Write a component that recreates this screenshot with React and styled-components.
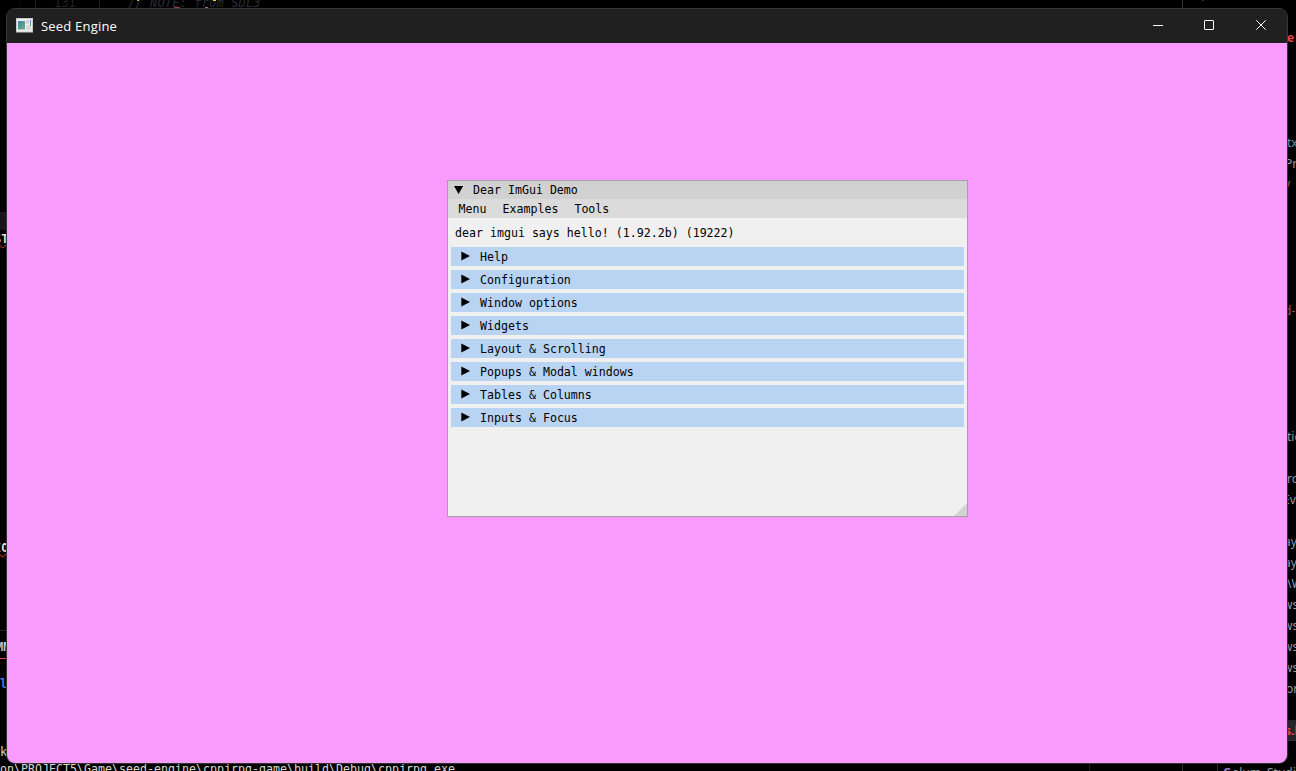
import React from "react";
import styled, { createGlobalStyle } from "styled-components";

const GlobalStyle = createGlobalStyle`
  body { margin: 0; background: #000; overflow: hidden; }
  * { box-sizing: border-box; }
`;

const Desktop = styled.main`
  position: relative;
  width: 1296px;
  height: 771px;
  padding: 8px 8px 7px 6px;
  overflow: hidden;
  background: #000;
`;

const Snippet = styled.span`
  position: absolute;
  left: ${(p) => p.$x}px;
  top: ${(p) => p.$y}px;
  color: ${(p) => p.$color || "#9a9a9a"};
  font: ${(p) => (p.$italic ? "italic " : "")}${(p) => p.$size || 12}px/16px
    ${(p) => (p.$mono ? '"DejaVu Sans Mono", monospace' : '"Noto Sans", sans-serif')};
  letter-spacing: ${(p) => p.$track || 0}px;
  font-weight: ${(p) => (p.$bold ? 700 : 400)};
  white-space: pre;
  text-decoration: ${(p) => (p.$wavy ? "underline wavy #e03c3c 1px" : "none")};
`;

const Mark = styled.i`
  position: absolute;
  left: ${(p) => p.$x}px;
  top: ${(p) => p.$y}px;
  width: ${(p) => p.$w || 1}px;
  height: ${(p) => p.$h || 1}px;
  background: ${(p) => p.$color || "#1c1c1c"};
`;

const AppWindow = styled.section`
  position: relative;
  display: flex;
  flex-direction: column;
  width: 1282px;
  height: 756px;
  border: 1px solid #363636;
  border-radius: 9px;
  overflow: hidden;
  background: #202020;
`;

const TitleBar = styled.header`
  display: flex;
  align-items: center;
  flex: 0 0 34px;
  padding-left: 9px;
  background: #202020;
`;

const AppTitle = styled.h1`
  flex: 1;
  margin: 0 0 1px 8px;
  color: #fff;
  font: 400 13px/18px "Open Sans", "Noto Sans", sans-serif;
  letter-spacing: 0.2px;
`;

const CaptionButton = styled.button`
  display: flex;
  align-items: center;
  justify-content: center;
  width: ${(p) => p.$w || 51}px;
  height: 34px;
  padding: 0 0 2px;
  border: 0;
  background: none;
`;

const Viewport = styled.div`
  flex: 1;
  padding: 137px 0 0 440px;
  background: #f99afe;
`;

const Panel = styled.article`
  display: flex;
  flex-direction: column;
  position: relative;
  width: 521px;
  height: 337px;
  border: 1px solid #a3a3a3;
  background: #f0f0f0;
  color: #000;
  font: 11.627px/13px "DejaVu Sans Mono", monospace;
  white-space: pre;
`;

const PanelTitle = styled.div`
  display: flex;
  align-items: center;
  gap: 10px;
  height: 18px;
  padding-left: 6px;
  background: #d1d1d1;

  svg { margin-top: -1px; }
`;

const MenuBar = styled.nav`
  display: flex;
  align-items: center;
  gap: 16px;
  height: 19px;
  padding: 1px 0 0 10.5px;
  background: #dbdbdb;
`;

const Greeting = styled.p`
  height: 29px;
  margin: 0;
  padding: 9px 0 0 7px;
`;

const Sections = styled.div`
  display: flex;
  flex-direction: column;
  gap: 4px;
  padding: 0 3px;
`;

const SectionHeader = styled.div`
  display: flex;
  align-items: center;
  gap: 10px;
  height: 19px;
  padding: 1px 0 0 10px;
  background: #b9d4f3;

  svg { margin-top: -1.4px; }
`;

const ResizeGrip = styled.i`
  position: absolute;
  right: 0;
  bottom: 0;
  width: 13px;
  height: 13px;
  background: #d3d3d3;
  clip-path: polygon(100% 0, 100% 100%, 0 100%);
`;

const IconDrawing = styled.svg`
  margin-bottom: 2px;
`;

const AppIcon = () => (
  <IconDrawing width="17" height="15" viewBox="0 0 17 15">
    <defs>
      <linearGradient id="screen" x1="0" y1="0" x2="1" y2="1">
        <stop offset="0" stopColor="#3f7fa8" />
        <stop offset="1" stopColor="#65b982" />
      </linearGradient>
    </defs>
    <rect x=".5" y=".5" width="16" height="13.5" fill="#eee" stroke="#c5c9cc" />
    <rect x="2" y="3" width="7" height="8.5" fill="url(#screen)" />
    <rect x="10" y="2" width="3" height="4" fill="#d3d3d3" />
    <rect x="10" y="7" width="5" height="5" fill="#dadada" />
    <rect x="14" y="2" width="1" height="3" fill="#4778ca" />
    <rect x="14" y="5" width="1" height="3" fill="#58a970" />
  </IconDrawing>
);

const Arrow = ({ down }) => (
  <svg width="9" height="10" viewBox="0 0 9 10">
    <path d={down ? "M0 1h9.2L4.6 9z" : "M.3 .5v9L9 5z"} />
  </svg>
);

const sections = [
  "Help",
  "Configuration",
  "Window options",
  "Widgets",
  "Layout & Scrolling",
  "Popups & Modal windows",
  "Tables & Columns",
  "Inputs & Focus",
];

const sideText = [
  [1287, 30, "e", "#f04444", true],
  [1287, 135, "txt", "#5f98a8"],
  [1285, 156, "Pr"],
  [1284, 176, "y", "#a66b50"],
  [1284, 303, "d-", "#a04a63"],
  [1287, 429, "tic"],
  [1287, 471, "rop"],
  [1283, 492, "Ev"],
  [1284, 534, "ay", "#8599ad"],
  [1284, 555, "ay", "#8599ad"],
  [1287, 576, "\\W", "#8599ad"],
  [1283, 597, "ws"],
  [1283, 618, "ws"],
  [1283, 639, "ws"],
  [1283, 660, "ws"],
  [1286, 681, "on"],
];

const marks = [
  [20, 0, 1, 8, "#080808"],
  [35, 0, 1, 8],
  [99, 0, 1, 8],
  [1182, 0, 1, 8, "#303030"],
  [1202, 0, 2, 1, "#123c35"],
  [0, 212, 7, 18, "#161616"],
  [0, 630, 7, 1, "#242424"],
  [0, 658, 7, 1, "#e83e51"],
  [1288, 720, 8, 21, "#252525"],
  [1288, 740, 8, 1, "#303030"],
  [1089, 764, 1, 7, "#202020"],
  [1182, 764, 1, 7, "#303030"],
  [1217, 764, 1, 7, "#303030"],
];

export default function App() {
  return (
    <Desktop>
      <GlobalStyle />
      {marks.map(([x, y, w, h, color]) => (
        <Mark key={`${x}-${y}`} $x={x} $y={y} $w={w} $h={h} $color={color} />
      ))}
      <Snippet $x={54} $y={-5} $mono $color="#242424">131</Snippet>
      <Snippet $x={128} $y={-5} $mono $italic $color="#2c2c36" $track={0.15}>// NOTE: from SDL3</Snippet>
      <Mark $x={137} $y={0} $w={2} $color="#d0b52d" />
      <Mark $x={213} $y={0} $w={3} $color="#e4ca20" />
      <Mark $x={174} $y={7} $w={6} $color="#9d3737" />
      <Mark $x={205} $y={7} $w={3} $color="#aa68aa" />
      <Snippet $x={-6} $y={231} $mono $bold $color="#ddd" $wavy>ST</Snippet>
      <Snippet $x={-6} $y={540} $mono $bold $color="#ddd" $wavy>IO</Snippet>
      <Snippet $x={-4} $y={639} $mono $bold $color="#b8c8ed">MM</Snippet>
      <Snippet $x={0} $y={676} $mono $bold $color="#397ce0">l</Snippet>
      <Snippet $x={0} $y={744} $mono $color="#d0d0c8">k</Snippet>
      <Snippet $x={0} $y={761} $mono $size={11.64} $color="#d8d8d0">
        {"on\\PROJECT5\\Game\\seed-engine\\cppjrpg-game\\build\\Debug\\cppjrpg.exe"}
      </Snippet>
      {sideText.map(([x, y, text, color, bold]) => (
        <Snippet key={y} $x={x} $y={y} $color={color} $bold={bold}>{text}</Snippet>
      ))}
      <Snippet $x={1285} $y={723} $bold $color="#f04444">s.l</Snippet>
      <Snippet $x={1223} $y={765} $bold $color="#a279db">C</Snippet>
      <Snippet $x={1232} $y={765}>olum</Snippet>
      <Snippet $x={1267} $y={765}>Studio</Snippet>

      <AppWindow>
        <TitleBar>
          <AppIcon />
          <AppTitle>Seed Engine</AppTitle>
          <CaptionButton aria-label="Minimize">
            <svg width="10" height="10"><path d="M0 5.5h10" stroke="#fff" /></svg>
          </CaptionButton>
          <CaptionButton aria-label="Maximize">
            <svg width="10" height="10"><rect x=".5" y=".5" width="9" height="9" rx=".5" fill="none" stroke="#fff" /></svg>
          </CaptionButton>
          <CaptionButton $w={53} aria-label="Close">
            <svg width="10" height="10"><path d="M.3.3l9.4 9.4M9.7.3L.3 9.7" stroke="#fff" /></svg>
          </CaptionButton>
        </TitleBar>
        <Viewport>
          <Panel>
            <PanelTitle><Arrow down /><span>Dear ImGui Demo</span></PanelTitle>
            <MenuBar><span>Menu</span><span>Examples</span><span>Tools</span></MenuBar>
            <Greeting>dear imgui says hello! (1.92.2b) (19222)</Greeting>
            <Sections>
              {sections.map((name) => (
                <SectionHeader key={name}><Arrow /><span>{name}</span></SectionHeader>
              ))}
            </Sections>
            <ResizeGrip />
          </Panel>
        </Viewport>
      </AppWindow>
    </Desktop>
  );
}
